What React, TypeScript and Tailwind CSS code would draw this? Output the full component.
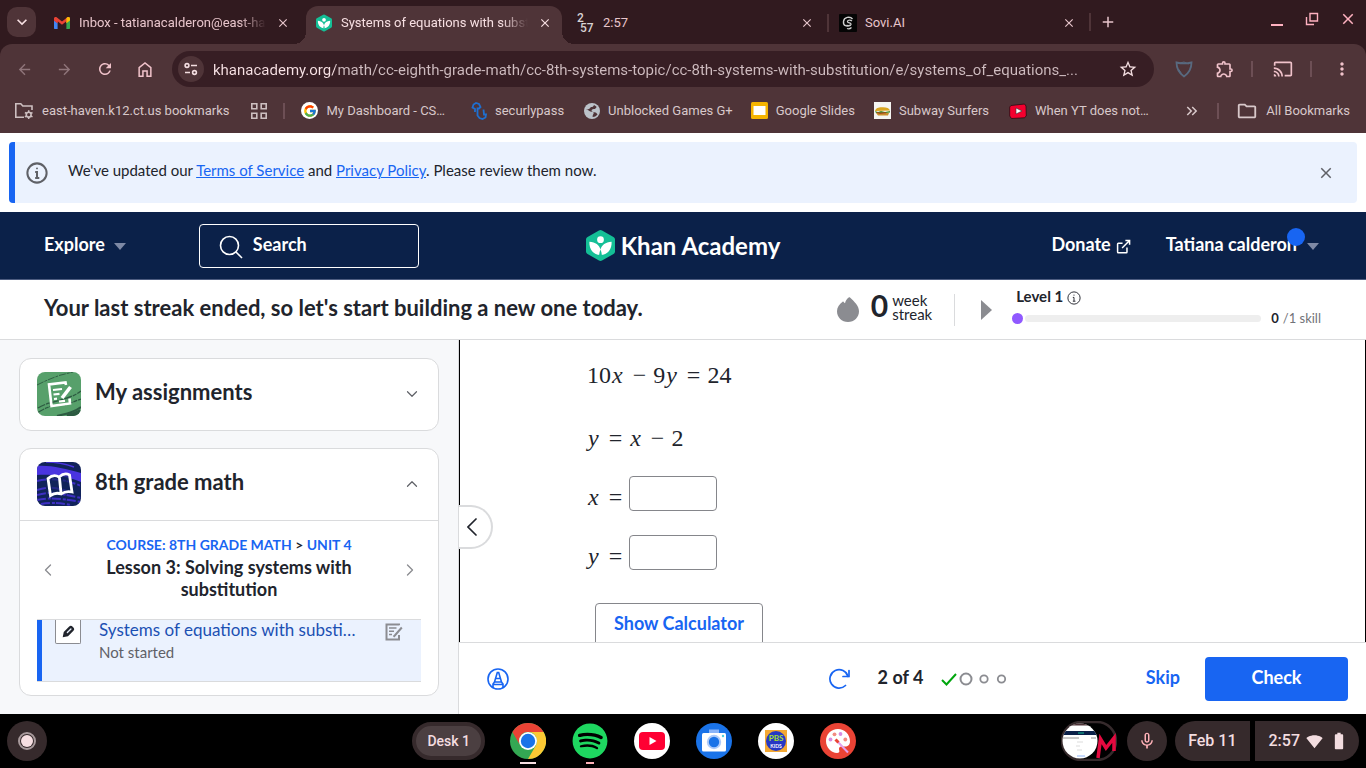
import { useState } from 'react'
import type { ReactNode } from 'react'
import {
  MdAdd,
  MdArrowBack,
  MdArrowForward,
  MdBatteryFull,
  MdCast,
  MdClose,
  MdKeyboardArrowDown,
  MdKeyboardDoubleArrowRight,
  MdMicNone,
  MdMoreVert,
  MdOutlineExtension,
  MdOutlineFolder,
  MdRefresh,
  MdSignalWifi4Bar,
  MdStarBorder,
} from 'react-icons/md'
import { FcGoogle } from 'react-icons/fc'
import { FaSpotify } from 'react-icons/fa'
import { ChevronDown, ChevronLeft, ChevronRight, ChevronUp } from 'lucide-react'

// ---------- Icons ----------

const KhanHex = ({ className, color }: { className: string; color: string }) => (
  <svg viewBox="0 0 30 32" className={className} aria-hidden="true">
    <path d="M13.400.5a3 3 0 0 1 3.200 0l11.800 6.700A3 3 0 0 1 30 9.800v12.400a3 3 0 0 1-1.500 2.600l-11.900 6.700a3 3 0 0 1-3.200 0L1.600 24.800A3 3 0 0 1 0 22.200V9.800a3 3 0 0 1 1.600-2.600z" fill={color} />
    <circle cx="15" cy="10" r="3.500" fill="#fff" />
    <path d="M3.500 12c6.300.2 10.400 3.500 11.500 8.200 1.100-4.700 5.200-8 11.500-8.200.4 7.600-4.200 13.700-11.500 13.700S3.100 19.600 3.500 12z" fill="#fff" />
    <path d="M13.600 25.700c.2-2 .7-3.700 1.400-5.500.7 1.800 1.200 3.500 1.400 5.500z" fill={color} />
  </svg>
)

const GmailIcon = () => (
  <svg viewBox="0 0 16 12" className="w-4 shrink-0" aria-hidden="true">
    <path d="M0 2v9c0 .6.400 1 1 1h2.600V5z" fill="#4285f4" />
    <path d="M16 2v9c0 .6-.4 1-1 1h-2.600V5z" fill="#34a853" />
    <path d="M0 1.500 3.600 1v5.300L0 3.500z" fill="#c5221f" />
    <path d="M0 1.600C0 .2 1.500-.5 2.600.3L8 4.400 13.400.3C14.500-.5 16 .2 16 1.600l-3.600 4.700V4.300L8 7.700 3.600 4.300v2L0 3.500z" fill="#ea4335" />
    <path d="M12.400 1 13.400.3C14.500-.5 16 .2 16 1.600v1.900l-3.600 2.800z" fill="#fbbc04" />
  </svg>
)

const SoviIcon = () => (
  <svg viewBox="0 0 18 18" className="size-[18px] shrink-0" aria-hidden="true">
    <rect width="18" height="18" rx="1" fill="#050505" />
    <g fill="none" stroke="#cfcfcf">
      <path d="M13.500 5C11 2 5 3 4.500 7.500S8 13 11 11" strokeWidth="1.400" />
      <path d="M13 7c-2-1.500-5-.8-4.500.8s4 .7 3.500 2.700-3.500 1.500-4.500.5M8 14.500c2 .8 3.500 0 4.500-1" strokeWidth="1.200" />
    </g>
  </svg>
)

const TuneIcon = () => (
  <svg viewBox="0 0 16 16" className="size-4" fill="none" stroke="#f3dde0" strokeWidth="1.600" aria-hidden="true">
    <circle cx="4" cy="4.500" r="1.900" />
    <path d="M8 4.500h6M2 11.500h5" />
    <circle cx="11.500" cy="11.500" r="1.900" />
  </svg>
)

const HomeIcon = () => (
  <svg viewBox="0 0 16 18" className="h-[17px] w-4" fill="none" stroke="currentColor" strokeWidth="1.600" aria-hidden="true">
    <path d="M1.800 7 8 2l6.200 5v9.200h-4v-5.500H5.800v5.500h-4z" />
  </svg>
)

const RestoreIcon = () => (
  <svg viewBox="0 0 14 14" className="size-3.5" fill="none" stroke="currentColor" strokeWidth="1.400" aria-hidden="true">
    <path d="M5 1.500h7.500V9H5z" />
    <path d="M1.500 5v7.500H9" />
  </svg>
)

const ShieldIcon = () => (
  <svg viewBox="0 0 18 18" className="size-[18px]" fill="none" stroke="#58697f" strokeWidth="1.800" aria-hidden="true">
    <path d="M1.500 2.500C7 3.800 11 3.800 16.500 2.500 16.500 8.500 14 13 9 16.500 4 13 1.500 8.500 1.500 2.500z" />
    <path d="M3 3.500 9 2l4.500 2M3.500 9l3 4.500" strokeWidth="1" />
  </svg>
)

const ManagedFolderIcon = () => (
  <svg viewBox="0 0 20 18" className="w-5 shrink-0" fill="none" stroke="#cdbfc0" aria-hidden="true">
    <path d="M10 15.200H1.800V1.800h5l2 2.200H18v4" strokeWidth="1.600" />
    <circle cx="14.700" cy="12.700" r="2.400" strokeWidth="1.600" />
    <path d="M14.700 8.300v1.800M14.700 15.300v1.800M10.900 10.500l1.600.9M16.900 14l1.600.9M18.500 10.500l-1.600.9M12.500 14l-1.600.9" strokeWidth="1.500" />
  </svg>
)

const AppsGridIcon = () => (
  <svg viewBox="0 0 16 16" className="size-4" fill="none" stroke="#cdbfc0" strokeWidth="1.600" aria-hidden="true">
    <path d="M.8.8h5v5h-5zM10.200.8h5v5h-5zM.8 10.200h5v5h-5zM10.200 10.200h5v5h-5z" />
  </svg>
)

const SecurlyIcon = () => (
  <svg viewBox="0 0 16 18" className="w-4" fill="none" stroke="#1f6fd0" strokeWidth="1.800" aria-hidden="true">
    <path d="M4 10V7L1.500 5.500l1-3L5 1l3 1 1.500 3L8 6.500H6.500v7l2 2.500 3 1 3-1.500.5-3h-2l-.5-5" />
  </svg>
)

const GlobeIcon = () => (
  <svg viewBox="0 0 16 16" className="size-4" aria-hidden="true">
    <circle cx="8" cy="8" r="8" fill="#bcc2c9" />
    <path d="M10 1.900c-.8 1.500-1 2-2.700 2.200-1.600.3-1 1.700-2.300 2C3.900 6.500 2.800 5.800 1.900 6c2 .2 3 2.200 4.500 2.400 2 .2 3.300.3 3.300 1.600S8.500 11.500 8.600 14c2.600-.1 4-1.200 5-2.700-1-.5-1-1.600-2.100-1.700-1.400-.3-3.700-.3-4-1.800.2-1.500 2-1.600 3.500-1.700l1.700-2.200C12 3.200 11.200 2.300 10 1.900z" fill="#4f3438" />
  </svg>
)

const SlidesIcon = () => (
  <svg viewBox="0 0 17 17" className="size-[17px]" aria-hidden="true">
    <rect width="17" height="17" rx="1.500" fill="#f5b400" />
    <rect x="2.500" y="4" width="12" height="9" fill="#fff" />
  </svg>
)

const SandwichIcon = () => (
  <svg viewBox="0 0 17 17" className="size-[17px]" aria-hidden="true">
    <rect width="17" height="17" fill="#f5f5f2" />
    <path d="M1 9c1-3.500 4-4 8-3.800 4 .1 6 1 7 3.300z" fill="#d9a520" />
    <path d="m1 9 3 1 3-1 4 1 5-1v1.500l-7 1-7-.5z" fill="#4c8c2b" />
    <path d="M2 11h13l-1 2.500H4z" fill="#c98d2c" />
    <path d="m3 10.500 3 .8 6-.6" stroke="#a33a1a" fill="none" />
  </svg>
)

const YtBookmarkIcon = () => (
  <svg viewBox="0 0 18 16" className="w-[18px]" aria-hidden="true">
    <path d="M2 2.500 15.500 1 17 3l.3 10-2 1.800L2.500 15.500.7 13V4z" fill="#f4002f" stroke="#2b0b12" strokeWidth=".8" />
    <path d="m7 5 6 3-6 3z" fill="#fff" stroke="#333" strokeWidth=".6" />
  </svg>
)

const FlameIcon = () => (
  <svg viewBox="0 0 22 25" className="w-[22px]" aria-hidden="true">
    <path d="M12 .3C9.700 2 8.500 4 8 6.200c-.8-.4-1.200-.9-1.500-1.400-.2-.4-.6-.4-.9 0C2.300 7.500 0 10.500 0 14.200 0 20.200 4.800 25 11 25s11-4.700 11-10.800C22 8.300 17.200 4.600 13 .4c-.3-.3-.700-.3-1-.1z" fill="#8b8c91" />
  </svg>
)

const InfoIcon = ({ className, weight }: { className: string; weight: string }) => (
  <svg viewBox="0 0 24 24" className={className} fill="none" stroke="currentColor" strokeWidth={weight} aria-hidden="true">
    <circle cx="12" cy="12" r="10.500" />
    <path d="M10 11h2v6.500M10 17.500h4.500" />
    <circle cx="12" cy="7" r="1" fill="currentColor" stroke="none" />
  </svg>
)

const AssignmentTile = () => (
  <svg viewBox="0 0 44 44" className="size-11 shrink-0 rounded-lg" aria-hidden="true">
    <rect width="44" height="44" fill="#57a06b" />
    <g stroke="#2c5a41" fill="none">
      <path d="M0 13C8 9 15 6 21 4M22 3.500 36 0" strokeWidth=".9" strokeDasharray="7 1 3 1" />
      <path d="M1 36c10-7 30-7 43-17M0 41c8-5 10-5 14-7M28 33l16-6" strokeWidth="1.300" strokeDasharray="8 1 4 1" />
      <path d="M20 44c8-2 16-3 24-9" strokeWidth="2" />
      <path d="M30 44c5-1 10-3 14-5" strokeWidth="4" />
    </g>
    <g fill="none" stroke="#fff" strokeWidth="2.600">
      <path d="m29 13-.5-2.500-16.500 2L14.500 34l18.500-2.500-.5-5" />
      <path d="m16 18 9-1M16.500 22.500l6-.7M17 27l3-.4M22 29.500l6-.7" strokeWidth="2.200" />
      <path d="m33.500 15-8.500 11" strokeWidth="3.600" />
    </g>
  </svg>
)

const CourseTile = () => (
  <svg viewBox="0 0 44 44" className="size-11 shrink-0 rounded-lg" aria-hidden="true">
    <rect width="44" height="44" fill="#11235a" />
    <path d="M0 4c14-1 28 3 44 7v9C30 14 14 12 0 13z" fill="#4a34e0" />
    <path d="M9 0c10 0 20 2 28 5" stroke="#4a34e0" strokeWidth="1.500" fill="none" />
    <path d="M0 19c16-4 30-1 44 5M0 28c14-4 20-2 30 1M0 33c14-4 20-2 44 3M0 38c12-3 28-1 44 2M4 42c10-2 20-1 30 1" stroke="#3e2fc4" strokeWidth="2" fill="none" strokeDasharray="9 2 3 1" />
    <path d="M11 16.500c4-3.500 7-4 11-1.500 4-3.500 7-4 10.500-2L35 30c-4-.8-7.500-.5-10.800 2-4-1.500-7-1-10.700 1.500zM22.500 16 24 31" fill="#11235a" fillOpacity=".6" stroke="#fff" strokeWidth="2.800" />
  </svg>
)

const AssignedIcon = () => (
  <svg viewBox="0 0 18 18" className="w-[18px]" fill="none" stroke="#8b8c91" aria-hidden="true">
    <path d="M14 2.200V1.500H1.500V16.500H14v-4.500" strokeWidth="2" />
    <path d="M4 5h7.500M4 8.300h5M4 11.500h3" strokeWidth="1.400" />
    <path d="m16.800 4.500-7 8-1.300 1.200" strokeWidth="2" />
  </svg>
)

const PencilIcon = () => (
  <svg viewBox="0 0 14 14" className="size-3.5" aria-hidden="true">
    <g transform="rotate(45 7 7)">
      <path d="M4 2.300C4 .5 5 0 7 0s3 .5 3 2.300V10L7 14.500 4 10z" fill="#21242c" />
      <path d="M6.900 2.800v5" stroke="#ebf2fe" strokeWidth="1.300" strokeLinecap="round" />
    </g>
  </svg>
)

const HighlighterIcon = () => (
  <svg viewBox="0 0 22 22" className="size-[22px]" fill="none" stroke="currentColor" strokeWidth="1.600" aria-hidden="true">
    <circle cx="11" cy="11" r="10" />
    <path d="M7.500 14 10.300 4.500h1.400l2.800 9.500M6 19.500V16l1.500-2h7L16 16v3.500M6 16.500h10M9 10.500h4" />
  </svg>
)

const RestartIcon = () => (
  <svg viewBox="0 0 22 22" className="size-[22px]" fill="none" stroke="currentColor" strokeWidth="1.700" strokeLinecap="round" aria-hidden="true">
    <path d="M17.500 17.500A9.200 9.200 0 1 1 20 8.500" />
    <path d="M21 2.500v6h-6" />
  </svg>
)

const ExternalIcon = () => (
  <svg viewBox="0 0 16 16" className="size-[15px]" fill="none" stroke="currentColor" strokeWidth="1.600" aria-hidden="true">
    <path d="M7 4.500H2.500c-.6 0-.8.300-.8.800v8.500c0 .5.300.8.800.8h8.500c.5 0 .7-.3.7-.8V9M6.500 9.500l8-8M10 1.500h4.500V6" />
  </svg>
)

const ChromeIcon = () => (
  <svg viewBox="0 0 36 36" className="size-9" aria-hidden="true">
    <circle cx="18" cy="18" r="18" fill="#34a853" />
    <path d="M2.400 9A18 18 0 0 1 33.600 9H18a9 9 0 0 0-7.800 13.500z" fill="#ea4335" />
    <path d="M33.600 9A18 18 0 0 1 18 36l7.800-13.500A9 9 0 0 0 18 9z" fill="#fcc934" />
    <circle cx="18" cy="18" r="9" fill="#fff" />
    <circle cx="18" cy="18" r="7.200" fill="#1a73e8" />
  </svg>
)

const YouTubeIcon = () => (
  <svg viewBox="0 0 36 36" className="size-9" aria-hidden="true">
    <circle cx="18" cy="18" r="18" fill="#fff" />
    <rect x="5" y="9" width="26" height="18" rx="4" fill="#ff0033" />
    <path d="m15.500 14 7 4-7 4z" fill="#fff" />
  </svg>
)

const CameraIcon = () => (
  <svg viewBox="0 0 36 36" className="size-9" aria-hidden="true">
    <circle cx="18" cy="18" r="18" fill="#1a73e8" />
    <path d="M13 6.500h10V12H13z" fill="#8ab4f8" />
    <rect x="6" y="10" width="24" height="18.500" rx="1.500" fill="#fff" />
    <circle cx="18" cy="19" r="7.200" fill="#aecbfa" />
    <circle cx="18" cy="19" r="5.200" fill="#1a73e8" />
    <circle cx="27" cy="13" r="1.200" fill="#4dd0e1" />
  </svg>
)

const PbsIcon = () => (
  <svg viewBox="0 0 36 36" className="size-9" aria-hidden="true">
    <circle cx="18" cy="18" r="18" fill="#fff" />
    <rect x="7" y="7" width="22" height="22" fill="#f3a833" />
    <circle cx="18" cy="18" r="10" fill="#2638c4" />
    <text x="18" y="18" textAnchor="middle" fontSize="8" fontWeight="700" fontFamily="Lato, sans-serif" fill="#a6e22e">PBS</text>
    <text x="18" y="25" textAnchor="middle" fontSize="5" fontWeight="700" fontFamily="Lato, sans-serif" fill="#fff">KIDS</text>
  </svg>
)

const PaintIcon = () => (
  <svg viewBox="0 0 36 36" className="size-9" aria-hidden="true">
    <circle cx="18" cy="18" r="18" fill="#ea4335" />
    <path d="M18 6C11 6 6 11.300 6 18s5.500 12 11 12c2 0 2.800-1.200 2.200-2.800-.7-2 .3-3.700 2.300-3.700H25c3 0 5-2 5-5C30 11 24.500 6 18 6z" fill="#fff" />
    <circle cx="10.500" cy="16.500" r="1.900" fill="#d98be0" />
    <circle cx="14.500" cy="11.300" r="1.900" fill="#f28b82" />
    <circle cx="20.500" cy="11" r="1.900" fill="#d98be0" />
    <circle cx="25.300" cy="16.500" r="1.900" fill="#f28b82" />
    <path d="m17 18 11 11.500" stroke="#e3a1ee" strokeWidth="2" />
    <path d="m15.500 16.500 3 3" stroke="#ea4335" strokeWidth="3" />
  </svg>
)

const TotePreview = () => (
  <svg viewBox="0 0 56 40" className="h-10 w-14" aria-hidden="true">
    <defs>
      <clipPath id="tote-shot">
        <circle cx="19" cy="20" r="17.500" />
      </clipPath>
    </defs>
    <rect x="1" y="1" width="54" height="38" rx="19" fill="#000" stroke="#362a2c" strokeWidth="2.500" />
    <path d="m37 37 2.500-19 5.500 9 8-10v13" stroke="#e5093f" strokeWidth="3.500" fill="none" />
    <g clipPath="url(#tote-shot)">
      <rect width="38" height="40" fill="#fff" />
      <rect width="38" height="4.500" fill="#4f3438" />
      <rect y="10" width="38" height="4" fill="#0b2149" />
      <path d="M0 17h18M30 17h5" stroke="#777" strokeWidth=".8" />
      <path d="M16 21h6M15 25h4M16 29h5" stroke="#ccc" strokeWidth=".7" />
      <path d="M16 35h8" stroke="#8fb4f8" />
      <path d="M17 12h6" stroke="#14bf96" />
    </g>
  </svg>
)

// ---------- Browser ----------

const Bookmark = ({ icon, label, className }: { icon: ReactNode; label: string; className: string }) => (
  <a href="#" className={`flex items-center gap-2 whitespace-nowrap ${className}`}>
    {icon}
    {label}
  </a>
)

const TabClose = ({ title }: { title: string }) => (
  <button aria-label={`Close ${title}`} className="flex size-4 shrink-0 items-center justify-center">
    <MdClose className="size-3.5" />
  </button>
)

const URL_TEXT =
  'khanacademy.org/math/cc-eighth-grade-math/cc-8th-systems-topic/cc-8th-systems-with-substitution/e/systems_of_equations_...'

function BrowserChrome() {
  const [url, setUrl] = useState(URL_TEXT)

  return (
    <header className="shrink-0 bg-[#311a1f] font-[Roboto,sans-serif] text-[#e8c5cb]">
      {/* Tab strip */}
      <div className="flex h-11 items-stretch text-[13px]">
        <button aria-label="Search tabs" className="mt-[7px] ml-[7px] flex h-[30px] w-[29px] items-center justify-center rounded-[10px] bg-[#4f3438] text-[#f7dfe2]">
          <MdKeyboardArrowDown className="size-5" />
        </button>
        <div className="flex w-[270px] items-center gap-[9px] pt-px pr-[15px] pl-[18px]">
          <GmailIcon />
          <span className="min-w-0 flex-1 overflow-hidden whitespace-nowrap [mask-image:linear-gradient(to_right,black_86%,transparent)]">
            Inbox - tatianacalderon@east-haven
          </span>
          <TabClose title="Inbox" />
        </div>
        <div className="relative mt-1.5 flex w-64 items-center gap-[9px] rounded-t-[12px] bg-[#4f3438] pr-[9px] pb-[5px] pl-2.5 text-[#f7dfe2]">
          <span className="absolute bottom-0 -left-3 size-3 bg-[radial-gradient(circle_at_0_0,transparent_12px,#4f3438_12px)]" />
          <span className="absolute -right-3 bottom-0 size-3 bg-[radial-gradient(circle_at_100%_0,transparent_12px,#4f3438_12px)]" />
          <KhanHex className="h-[18px] w-4 shrink-0" color="#14bf96" />
          <span className="min-w-0 flex-1 overflow-hidden whitespace-nowrap [mask-image:linear-gradient(to_right,black_86%,transparent)]">
            Systems of equations with substitution
          </span>
          <TabClose title="Systems of equations" />
        </div>
        <div className="flex w-[265px] items-center gap-2.5 pt-px pr-3 pl-[15px]">
          <span className="flex w-4 shrink-0 flex-col text-xs leading-[10px] font-medium text-[#d8d3d4]">
            <span>2</span>
            <span className="pl-[3px]">57</span>
          </span>
          <span className="flex-1">2:57</span>
          <TabClose title="2:57" />
        </div>
        <div className="flex w-[262px] items-center gap-2 pt-px pr-3">
          <span className="mr-0.5 h-[18px] w-0.5 bg-[#4f3438]" />
          <SoviIcon />
          <span className="flex-1">Sovi.AI</span>
          <TabClose title="Sovi.AI" />
        </div>
        <div className="flex items-center gap-2">
          <span className="h-[18px] w-0.5 bg-[#4f3438]" />
          <button aria-label="New tab">
            <MdAdd className="size-[18px]" />
          </button>
        </div>
        <div className="ml-auto flex items-center gap-5 pr-[9px] pb-1.5 text-[#ffb1c0]">
          <button aria-label="Minimize" className="flex size-3.5 items-end">
            <span className="h-0.5 w-3 bg-current" />
          </button>
          <button aria-label="Restore">
            <RestoreIcon />
          </button>
          <button aria-label="Close window">
            <MdClose className="size-[18px]" />
          </button>
        </div>
      </div>

      <div className="rounded-t-xl bg-[#4f3438]">
        {/* Toolbar */}
        <div className="flex items-center pt-[7px] pr-3.5 pl-4">
          <div className="flex gap-[23px] pr-[19px] text-[#f0c2ca]">
            <button aria-label="Back" className="text-[#8f757a]"><MdArrowBack className="size-[17px]" /></button>
            <button aria-label="Forward" className="text-[#8f757a]"><MdArrowForward className="size-[17px]" /></button>
            <button aria-label="Reload"><MdRefresh className="size-[18px]" /></button>
            <button aria-label="Home"><HomeIcon /></button>
          </div>
          <div className="flex h-9 min-w-0 flex-1 items-center rounded-full bg-[#371e24] pr-4 pl-1.5">
            <button aria-label="Site information" className="mr-[9px] flex size-[26px] items-center justify-center rounded-full bg-[#4f3438]">
              <TuneIcon />
            </button>
            <input
              aria-label="Address"
              value={url}
              onChange={(e) => setUrl(e.target.value)}
              className="min-w-0 flex-1 bg-[linear-gradient(to_right,#f9e3e6_122px,#cfbcc0_122px)] bg-clip-text pt-0.5 text-[15px] text-ellipsis text-transparent outline-none"
            />
            <button aria-label="Bookmark this page" className="ml-[17px] text-[#f3dde0]">
              <MdStarBorder className="size-5" />
            </button>
          </div>
          <div className="flex items-center pl-[21px] text-[#f0c2ca]">
            <button aria-label="Securly"><ShieldIcon /></button>
            <button aria-label="Extensions" className="ml-[22px]"><MdOutlineExtension className="size-5" /></button>
            <span className="ml-4 h-4 w-0.5 bg-[#6d4f55]" />
            <button aria-label="Cast" className="ml-5"><MdCast className="size-5" /></button>
            <span className="ml-[17px] h-4 w-0.5 bg-[#6d4f55]" />
            <button aria-label="Menu" className="ml-5"><MdMoreVert className="size-5" /></button>
          </div>
        </div>

        {/* Bookmarks bar */}
        <nav className="flex h-[46px] items-center pt-px pr-4 pl-3.5 text-[13px] text-[#d8c8ca]">
          <Bookmark icon={<ManagedFolderIcon />} label="east-haven.k12.ct.us bookmarks" className="mr-[22px]" />
          <button aria-label="Apps"><AppsGridIcon /></button>
          <span className="mx-4 h-4 w-0.5 bg-[#6d4f55]" />
          <Bookmark
            icon={<span className="flex size-[17px] items-center justify-center rounded-full bg-white"><FcGoogle className="size-3.5" /></span>}
            label="My Dashboard - CS…"
            className="mr-[26px]"
          />
          <Bookmark icon={<SecurlyIcon />} label="securlypass" className="mr-5" />
          <Bookmark icon={<GlobeIcon />} label="Unblocked Games G+" className="mr-[18px]" />
          <Bookmark icon={<SlidesIcon />} label="Google Slides" className="mr-[19px]" />
          <Bookmark icon={<SandwichIcon />} label="Subway Surfers" className="mr-5" />
          <Bookmark icon={<YtBookmarkIcon />} label="When YT does not…" className="" />
          <button aria-label="More bookmarks" className="ml-auto"><MdKeyboardDoubleArrowRight className="size-[18px]" /></button>
          <span className="mr-[17px] ml-4 h-4 w-0.5 bg-[#6d4f55]" />
          <Bookmark icon={<MdOutlineFolder className="size-[22px]" />} label="All Bookmarks" className="" />
        </nav>
      </div>
    </header>
  )
}

// ---------- Khan Academy page ----------

function PolicyBanner() {
  return (
    <div className="mx-[9px] my-[9px] flex h-[61px] items-center rounded border-l-6 border-[#1865f2] bg-[#ebf2fe] pr-[22px] pl-[11px]">
      <InfoIcon className="size-[22px] text-[#5f6167]" weight="2.200" />
      <p className="ml-5 flex-1 pb-1 text-[15px]">
        We've updated our <a href="#" className="text-[#1865f2] underline">Terms of Service</a> and{' '}
        <a href="#" className="text-[#1865f2] underline">Privacy Policy</a>. Please review them now.
      </p>
      <button aria-label="Dismiss" className="text-[#5f6167]"><MdClose className="size-[18px]" /></button>
    </div>
  )
}

const Caret = () => (
  <svg viewBox="0 0 12 7" className="mt-1.5 w-3 text-[#7e89a5]" aria-hidden="true">
    <path d="M0 0h12L6 7z" fill="currentColor" />
  </svg>
)

function SiteHeader() {
  return (
    <div className="grid h-[68px] shrink-0 grid-cols-[1fr_auto_1fr] items-center border-b border-[#4d5c80] bg-[#0b2149] text-lg leading-6 font-bold text-white">
      <div className="flex items-center pl-11">
        <button className="flex items-center gap-[9px] pb-1">Explore <Caret /></button>
        <button className="ml-[73px] flex h-11 w-[220px] items-center gap-2.5 rounded border border-white pl-[19px]">
          <svg viewBox="0 0 24 24" className="mt-0.5 size-6" fill="none" stroke="currentColor" strokeWidth="1.600" aria-hidden="true">
            <circle cx="10.500" cy="10.500" r="9" />
            <path d="m17 17 6 6" />
          </svg>
          <span className="pb-1">Search</span>
        </button>
      </div>
      <a href="#" className="flex items-center gap-1.5">
        <KhanHex className="h-[31px] w-[29px]" color="#14bf96" />
        <span className="pt-px text-2xl">Khan Academy</span>
      </a>
      <div className="flex items-center justify-end gap-[35px] pr-[47px] pb-1">
        <a href="#" className="flex items-center gap-[5px]">Donate <span className="mt-1.5"><ExternalIcon /></span></a>
        <button className="relative flex items-center gap-2.5">
          Tatiana calderon <Caret />
          <span className="absolute -top-1 right-3.5 size-[18px] rounded-full bg-[#1865f2]" />
        </button>
      </div>
    </div>
  )
}

function StreakBar() {
  return (
    <div className="flex h-[60px] shrink-0 items-center border-b border-[#dadbdd] pr-[45px] pl-11">
      <h2 className="pb-1 text-[22px] font-bold">Your last streak ended, so let's start building a new one today.</h2>
      <div className="ml-auto flex items-center">
        <FlameIcon />
        <span className="ml-3 pb-2.5 text-[30px] leading-8 font-bold">0</span>
        <span className="ml-1 pb-1.5 text-[15px] leading-[14px]">week<br />streak</span>
        <span className="ml-[22px] h-8 w-px bg-[#dadbdd]" />
        <button aria-label="Next stat" className="mr-5 ml-[26px]">
          <svg viewBox="0 0 11 20" className="w-[11px]" aria-hidden="true"><path d="M0 0v20l11-10z" fill="#8b8c91" /></svg>
        </button>
        <div className="pb-0.5">
          <div className="ml-1 flex items-center gap-1 text-[15px] leading-5 font-bold">
            Level 1 <InfoIcon className="mt-1 size-3.5" weight="1.600" />
          </div>
          <div className="flex items-center text-[13px] leading-6 text-[#717378]">
            <span className="size-[11px] rounded-full bg-[#9059ff]" />
            <span className="mr-2.5 ml-0.5 h-[7px] w-[236px] rounded-full bg-[#eeeeee]" />
            <span className="pb-0.5"><b className="mr-1 text-[#21242c]">0</b>/1 skill</span>
          </div>
        </div>
      </div>
    </div>
  )
}

function Sidebar() {
  return (
    <aside className="flex w-[458px] shrink-0 flex-col gap-[17px] bg-[#f7f8fa] px-[19px] pt-[18px] pb-[18px]">
      <section className="rounded-xl border border-[#dadbdd] bg-white">
        <button className="flex h-[71px] w-full items-center gap-3.5 px-[17px] pb-0.5 text-[22px] font-bold">
          <AssignmentTile />
          <span className="pb-1">My assignments</span>
          <ChevronDown className="ml-auto size-[18px] text-[#5f6167]" strokeWidth={1.600} />
        </button>
      </section>

      <section className="flex min-h-0 flex-1 flex-col rounded-xl border border-[#dadbdd] bg-white">
        <button className="flex h-[71px] w-full shrink-0 items-center gap-3.5 px-[17px] pb-0.5 text-[22px] font-bold">
          <CourseTile />
          <span className="pb-1">8th grade math</span>
          <ChevronUp className="ml-auto size-[18px] text-[#5f6167]" strokeWidth={1.600} />
        </button>
        <div className="flex h-[99px] shrink-0 items-center justify-between border-t border-[#dadbdd] px-[18px]">
          <button aria-label="Previous lesson" className="text-[#8b8c91]"><ChevronLeft className="size-5" strokeWidth={1.600} /></button>
          <div className="max-w-[270px] pb-1.5 text-center text-lg leading-[22px] font-bold">
            <p className="text-sm leading-[22px]">
              <a href="#" className="text-[#1865f2]">COURSE: 8TH GRADE MATH</a> &gt; <a href="#" className="text-[#1865f2]">UNIT 4</a>
            </p>
            <h3>Lesson 3: Solving systems with substitution</h3>
          </div>
          <button aria-label="Next lesson" className="text-[#8b8c91]"><ChevronRight className="size-5" strokeWidth={1.600} /></button>
        </div>
        <div className="mx-[17px] h-[63px] overflow-hidden border-y border-[#dadbdd]">
          <a href="#" className="flex h-full items-start border-l-5 border-[#1865f2] bg-[#ebf2fe] pr-[18px] pl-[13px]">
            <span className="flex h-6 w-[26px] shrink-0 items-center justify-center rounded-b-xs border border-t-0 border-[#8b8c91] bg-white">
              <PencilIcon />
            </span>
            <span className="ml-[18px] min-w-0 flex-1">
              <span className="block truncate text-[17px] leading-5 text-[#1b50b3]">Systems of equations with substitution</span>
              <span className="block text-[15px] leading-6 text-[#5f6167]">Not started</span>
            </span>
            <span className="mt-[3px] ml-6"><AssignedIcon /></span>
          </a>
        </div>
      </section>
    </aside>
  )
}

const V = ({ children }: { children: string }) => <i className="pr-[3px] pl-px">{children}</i>
const Op = ({ children }: { children: string }) => <span className="px-[7px]">{children}</span>

const AnswerRow = ({ name }: { name: string }) => (
  <label className="flex items-center">
    <span className="pt-[7px]"><V>{name}</V><span className="px-[7px]">=</span></span>
    <input className="h-[35px] w-[88px] rounded border border-[#85868b] bg-white px-2 outline-none focus:border-[#1865f2]" />
  </label>
)

function Exercise() {
  return (
    <main className="relative flex min-w-0 flex-1 flex-col border-l border-[#dadbdd]">
      <div className="min-h-0 flex-1 overflow-hidden border-x border-black pl-[127px]">
        <div className="flex flex-col pt-[21px] font-['Liberation_Serif',serif] text-2xl leading-7">
          <p>10<V>x</V><Op>−</Op>9<V>y</V><Op>=</Op>24</p>
          <p className="mt-[35px] mb-6"><V>y</V><Op>=</Op><V>x</V><Op>−</Op>2</p>
          <div className="flex flex-col gap-6">
            <AnswerRow name="x" />
            <AnswerRow name="y" />
          </div>
        </div>
        <button className="mt-[33px] ml-2 h-11 rounded border border-[#85868b] px-[18px] pb-1 text-lg leading-6 font-bold text-[#1865f2]">Show Calculator</button>
      </div>

      <div className="grid h-[72px] shrink-0 grid-cols-[1fr_auto_1fr] items-center border-t border-[#dadbdd] pr-[18px] pl-7 text-lg leading-6 font-bold">
        <button aria-label="Highlight text" className="justify-self-start text-[#1865f2]"><HighlighterIcon /></button>
        <div className="flex items-center">
          <button aria-label="Start over" className="text-[#1865f2]"><RestartIcon /></button>
          <span className="ml-7 pb-1">2 of 4</span>
          <svg viewBox="0 0 68 16" className="ml-4 w-[68px]" fill="none" aria-hidden="true">
            <path d="m3 9 4.500 4.500L17 3" stroke="#00a60e" strokeWidth="2" />
            <circle cx="27" cy="8" r="5.500" stroke="#8b8c91" strokeWidth="2" />
            <circle cx="45" cy="8" r="3.700" stroke="#8b8c91" strokeWidth="1.800" />
            <circle cx="62.500" cy="8" r="3.700" stroke="#8b8c91" strokeWidth="1.800" />
          </svg>
        </div>
        <div className="flex items-center justify-end gap-[25px]">
          <button className="pb-1 text-[#1865f2]">Skip</button>
          <button className="h-11 w-[143px] rounded bg-[#1865f2] pb-1 text-white">Check</button>
        </div>
      </div>

      {/* Collapse handle sits on top of the pane edge */}
      <button aria-label="Collapse sidebar" className="absolute top-[165px] left-0 flex h-11 w-[34px] items-center rounded-r-full border-2 border-l-0 border-[#dadbdd] bg-white">
        <svg viewBox="0 0 10 18" className="ml-2 h-[18px] w-2.5" fill="none" stroke="#21242c" strokeWidth="1.700" strokeLinecap="round" aria-hidden="true">
          <path d="M9 1 1 9l8 8" />
        </svg>
      </button>
    </main>
  )
}

// ---------- Shelf ----------

const apps = [
  { name: 'Chrome', icon: <ChromeIcon />, mark: 'w-4 bg-[#f7dfe2]' },
  { name: 'Spotify', icon: <span className="block rounded-full bg-black"><FaSpotify className="size-9 text-[#1ed760]" /></span>, mark: 'w-2 bg-[#ffb1b8]' },
  { name: 'YouTube', icon: <YouTubeIcon />, mark: '' },
  { name: 'Camera', icon: <CameraIcon />, mark: '' },
  { name: 'PBS Kids', icon: <PbsIcon />, mark: '' },
  { name: 'Canvas', icon: <PaintIcon />, mark: '' },
]

function Shelf() {
  return (
    <footer className="grid h-[54px] shrink-0 grid-cols-[1fr_auto_1fr] items-center bg-black px-[7px] font-[Roboto,sans-serif] text-base font-medium text-[#f3dde0]">
      <div className="flex items-center justify-between pr-[25px]">
        <button aria-label="Launcher" className="flex size-10 items-center justify-center rounded-full bg-[#362a2c]">
          <span className="flex size-[18px] items-center justify-center rounded-full border-2 border-[#a89a9c]">
            <span className="size-3 rounded-full bg-[#f7dfe2]" />
          </span>
        </button>
        <button className="h-[38px] rounded-full border-4 border-[#362a2c] bg-[#4b3f41] px-[11px] text-sm">Desk 1</button>
      </div>
      <div className="flex gap-[26px]">
        {apps.map((app) => (
          <button key={app.name} aria-label={app.name} className="relative">
            {app.icon}
            {app.mark && <span className={`absolute -bottom-[5px] left-1/2 h-0.5 -translate-x-1/2 ${app.mark}`} />}
          </button>
        ))}
      </div>
      <div className="flex items-center justify-end">
        <button aria-label="Recent files" className="mr-2.5"><TotePreview /></button>
        <button aria-label="Dictation" className="mr-2 flex size-10 items-center justify-center rounded-full bg-[#362a2c] text-[#ffb1b8]">
          <MdMicNone className="size-5" />
        </button>
        <button className="mr-[5px] h-10 rounded-l-full rounded-r bg-[#362a2c] px-[13px]">Feb 11</button>
        <button className="flex h-10 items-center gap-1.5 rounded-l rounded-r-full bg-[#362a2c] pr-2.5 pl-3.5">
          2:57 <MdSignalWifi4Bar className="size-[17px]" /> <MdBatteryFull className="size-5" />
        </button>
      </div>
    </footer>
  )
}

export default function App() {
  return (
    <div className="flex h-screen flex-col overflow-hidden bg-white font-[Lato,sans-serif] text-base text-[#21242c]">
      <BrowserChrome />
      <PolicyBanner />
      <SiteHeader />
      <StreakBar />
      <div className="flex min-h-0 flex-1">
        <Sidebar />
        <Exercise />
      </div>
      <Shelf />
    </div>
  )
}
